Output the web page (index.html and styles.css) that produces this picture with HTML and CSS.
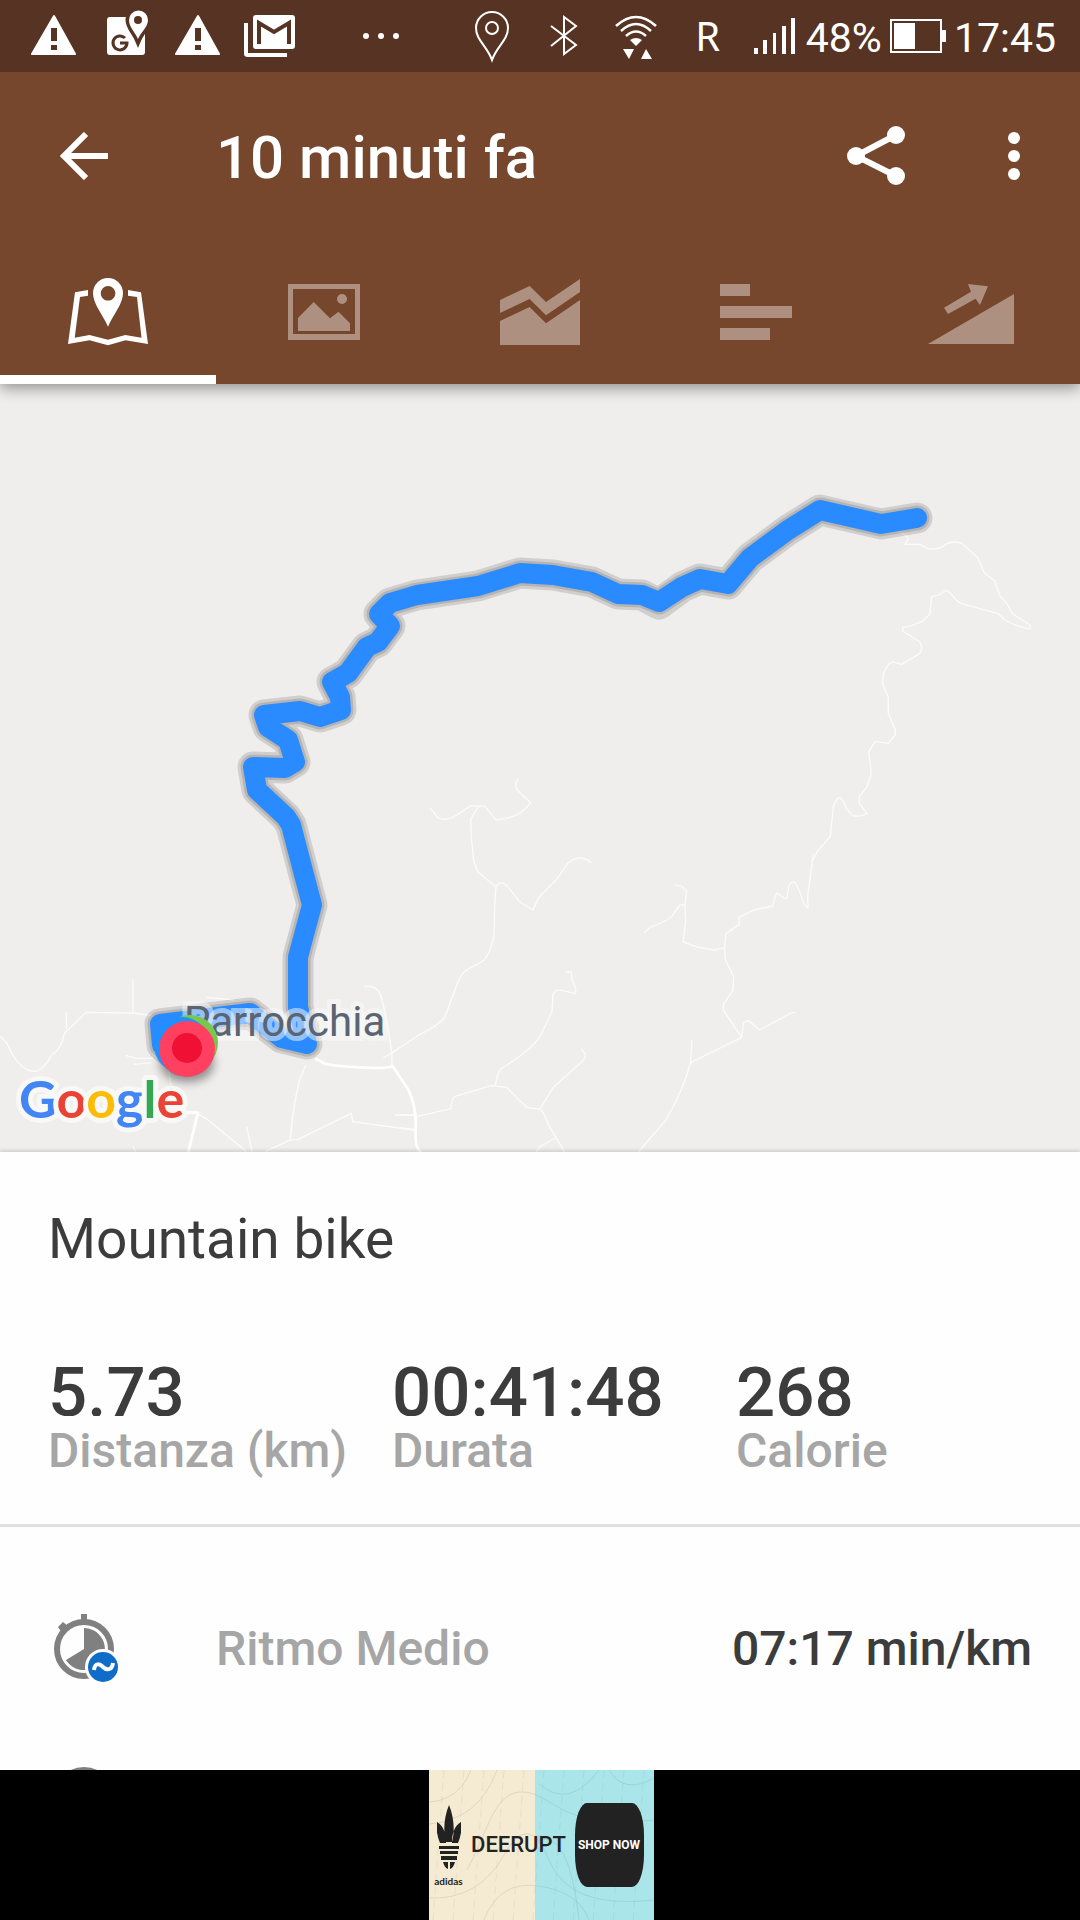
FILE: index.html
```html
<!DOCTYPE html>
<html lang="it">
<head>
<meta charset="utf-8">
<meta name="viewport" content="width=device-width, initial-scale=1">
<title>10 minuti fa</title>
<link rel="stylesheet" href="styles.css">
</head>
<body>
<div class="status">
  <div class="status-group">
    <svg class="status-icon" viewBox="0 0 72 72" aria-hidden="true"><path fill="#fff" stroke="#fff" stroke-width="2" stroke-linejoin="round" d="M36 16 57 54H14Z"/><path fill="#573323" d="M33 28h6v13h-6zM33 45h6v5h-6z"/></svg>
    <svg class="status-icon" viewBox="0 0 72 72" aria-hidden="true"><rect x="17" y="17" width="38" height="38" rx="3" fill="#fff"/><path fill="#fff" stroke="#573323" stroke-width="7" d="M48 39C45 32 39 27 39 20a9 9 0 0 1 18 0c0 7-6 12-9 19Z"/><path fill="#573323" d="M55 10h9v25h-9z"/><path fill="#fff" d="M48 39C45 32 39 27 39 20a9.500 9.500 0 0 1 19 0c0 7-7 12-10 19Z"/><circle cx="48" cy="20" r="4" fill="#573323"/><path fill="none" stroke="#573323" stroke-width="3" d="M35 38a7 7 0 1 0 2 5h-7"/></svg>
    <svg class="status-icon" viewBox="0 0 72 72" aria-hidden="true"><path fill="#fff" stroke="#fff" stroke-width="2" stroke-linejoin="round" d="M36 16 57 54H14Z"/><path fill="#573323" d="M33 28h6v13h-6zM33 45h6v5h-6z"/></svg>
    <svg class="status-icon" viewBox="0 0 72 72" aria-hidden="true"><rect x="37" y="15" width="42" height="34" rx="3" fill="#fff" transform="translate(-18 0)"/><path fill="none" stroke="#fff" stroke-width="4" d="M12 23v31q0 1 2 1h39"/><path fill="none" stroke="#573323" stroke-width="4" d="M25 44V23l15 9 15-9v21"/></svg>
  </div>
  <svg class="status-icon" viewBox="0 0 72 72" aria-hidden="true"><g fill="#fff"><circle cx="21" cy="36" r="3"/><circle cx="36" cy="36" r="3"/><circle cx="51" cy="36" r="3"/></g></svg>
  <div class="status-group">
    <svg class="status-icon" viewBox="0 0 72 72" aria-hidden="true"><g fill="none" stroke="#fff" stroke-width="2"><path d="M36 60C31 46 20 40 20 28a16 16 0 0 1 32 0c0 12-11 18-16 32Z"/><circle cx="36" cy="28" r="6"/></g></svg>
    <svg class="status-icon" viewBox="0 0 72 72" aria-hidden="true"><path fill="none" stroke="#fff" stroke-width="2" d="m23 26 25 19-12 9V17l12 9-25 20"/></svg>
    <svg class="status-icon" viewBox="0 0 72 72" aria-hidden="true"><g fill="none" stroke="#fff" stroke-width="2.500"><path d="M16 26q20-18 40 0M21 31q15-14 30 0M26 36q10-9 20 0"/></g><path fill="#fff" d="M30 40q6-4 12 0l-6 6zM23 49h11l-5 10zM41 59l5-10 6 10z"/></svg>
    <span class="roaming">R</span>
    <svg class="signal" viewBox="0 0 42 72" aria-hidden="true"><path fill="#fff" d="M0 48h4v6H0zM9 40h4v14H9zM19 33h3v21h-3zM28 26h4v28h-4zM37 18h4v36h-4z"/></svg>
    <span class="status-text">48%</span>
    <svg class="battery" viewBox="0 0 56 72" aria-hidden="true"><rect x="1" y="20" width="50" height="32" fill="none" stroke="#fff" stroke-width="2"/><path fill="#fff" d="M4 23h21v26H4zM52 30h4v12h-4z"/></svg>
    <span class="status-text">17:45</span>
  </div>
</div>

<header class="appbar">
  <div class="toolbar">
    <button class="icon-button back" type="button" aria-label="Indietro"><svg class="back-icon" viewBox="0 0 48 48"><path fill="none" stroke="#fff" stroke-width="6" d="M26 2 4 24l22 22M3 24h45"/></svg></button>
    <h1 class="title">10 minuti fa</h1>
    <button class="icon-button" type="button" aria-label="Condividi"><svg class="action-icon" viewBox="0 0 72 72"><path fill="none" stroke="#fff" stroke-width="6" d="M56 15 16 36l40 20"/><g fill="#fff"><circle cx="56" cy="15" r="9"/><circle cx="16" cy="36" r="9"/><circle cx="56" cy="56" r="9"/></g></svg></button>
    <button class="icon-button" type="button" aria-label="Altro"><svg class="action-icon" viewBox="0 0 72 72"><g fill="#fff"><circle cx="36" cy="18" r="6"/><circle cx="36" cy="36" r="6"/><circle cx="36" cy="54" r="6"/></g></svg></button>
  </div>
  <nav class="tabs">
    <button class="tab tab-active" type="button" aria-label="Mappa"><svg class="tab-icon" viewBox="0 0 96 96"><path d="M28 26 15 28.300 8 80 29.500 76.300 48 81.300 65.500 76.300 88 80 81 28.300 68 26V31.700L77 33 81.500 73.700 65.300 71 48 75.700 29.500 71 14.700 73.700 20 33 28 31.700Z"/><path fill-rule="evenodd" d="M48 62.700C43 51 33 40 33 29a15 15 0 0 1 30 0c0 11-10 22-15 33.700ZM48 22a7.300 7.300 0 1 0 .1 0Z"/></svg></button>
    <button class="tab" type="button" aria-label="Foto"><svg class="tab-icon" viewBox="0 0 96 96"><path fill-rule="evenodd" d="M12 20H84V76H12ZM17 25V70H79V25Z"/><path d="M22 54 37.700 38 54 54.300 62.500 47.700 74 59.300V67H22Z"/><circle cx="66" cy="35" r="5"/></svg></button>
    <button class="tab" type="button" aria-label="Grafico"><svg class="tab-icon" viewBox="0 0 96 96"><path d="M8 36 37.600 22 54 38 88 15V28L54 51.300 37.600 35 8 49ZM8 57 37.600 43 54 59.300 88 36V81H8Z"/></svg></button>
    <button class="tab" type="button" aria-label="Parziali"><svg class="tab-icon" viewBox="0 0 96 96"><path d="M12 20H42V32H12ZM12 42H84V54H12ZM12 64H62V76H12Z"/></svg></button>
    <button class="tab" type="button" aria-label="Dislivello"><svg class="tab-icon" viewBox="0 0 96 96"><path d="M4 80 90 30V80ZM20 43.700 47 27.700 44 20 64 22.300 56 41 51.600 34.700 24 50Z"/></svg></button>
  </nav>
</header>

<main class="content">
  <svg class="map" viewBox="0 384 1080 768" role="img" aria-label="Mappa del percorso">
    <g fill="none" stroke="#fbfbfa" stroke-linejoin="round">
      <!-- eastern mountain road -->
      <g transform="translate(600 460) scale(.3333)" stroke-width="4">
        <path d="M885 205 922 230 924 240 914 253H960L985 267Q1015 270 1035 255T1085 250L1132 292 1153 338 1184 362 1200 408 1222 432 1236 460 1290 495V507Q1250 500 1215 480L1195 461 1085 431Q1070 425 1060 410T1038 391L1020 403 995 410 990 462 968 484 935 497 908 502V513L960 546Q970 565 960 580L905 613 880 606 866 612 850 640 848 672 865 712V760L886 810V825L865 850 826 844 806 875 814 942 800 982 778 1010V1030L801 1060Q785 1072 758 1067L738 1044Q725 1005 712 1017T698 1060L691 1130 652 1174 640 1200"/>
      </g>
      <!-- central valleys -->
      <g transform="translate(400 740) scale(.3333)" stroke-width="4">
        <path d="M90 204 115 234Q140 245 170 225T215 197L255 199 288 240Q360 235 392 188L352 150Q340 132 355 117M238 197 212 237Q213 300 221 360L232 394 288 441 284 500 282 590 269 633 253 660 198 691Q180 705 168 741T132 836L100 862 65 880-50 955M288 441Q303 415 325 442L360 486 399 510 416 473 470 418 505 368Q540 340 574 368"/>
        <path d="M1240 340 1235 380 1223 470 1224 505 1212 492Q1200 455 1190 435T1167 435L1161 475H1153L1130 458 1118 498 1062 510 1017 532V554L978 581 974 625 976 658 1001 710 999 751 970 794V810L1025 892 1031 847 1045 842 1080 870 1175 818H1187M826 436Q850 435 860 455L855 495H840L815 530Q800 545 750 562L732 580M855 495 857 545 849 605Q890 625 945 630L974 623M1025 892 872 968 876 900M872 968Q850 1050 798 1140L715 1236"/>
        <path d="M495 696H514L516 720 527 745V761L485 751H468L459 763 456 815 421 888Q395 930 302 987 290 1005 286 1038M544 926 557 945 551 960 460 1042 420 1107 382 1103Q350 1075 320 1042L274 1037 165 1069Q155 1075 152 1106L50 1130M420 1107 430 1118 448 1160 494 1236M466 1194 423 1218 408 1236"/>
        <path d="M0 1125H48M0 1163 45 1168"/>
      </g>
      <!-- village streets -->
      <g transform="translate(0 820) scale(.3444 .3333)" stroke-width="4">
        <path d="M0 648 20 670Q50 740 85 752T148 708Q180 685 187 640L250 577 385 579 440 587M193 577V628M386 478V579M600 532 680 540M365 706 395 715H445M388 733 440 728M490 750 498 810M888 735 870 780Q850 860 843 960L770 995M843 960 865 958 1020 880 1024 905 1202 930M1147 885H1210M578 884 600 897 716 995M716 920 732 995M386 978 394 995M1057 500Q1090 495 1103 520 1118 560 1138 700V740M1138 700 1160 685"/>
        <path stroke="#fff" stroke-width="8" d="M915 715 945 732Q1000 743 1115 744L1140 739 1185 808Q1210 860 1207 925T1223 995M540 878H575L547 995"/>
      </g>
    </g>
    <!-- recorded track with its dark casing -->
    <g fill="none" stroke-linejoin="round" stroke-linecap="round">
      <path id="track-outer" stroke="#000" stroke-opacity=".13" stroke-width="31" d="M917 518 881 524 820 510 788 530 750 558 728 584 700 579 682 587 659 604 642 595 618 594 592 582 553 575 520 573 478 586 417 595 390 603 379 614 390 626 378 642 367 647 348 673 332 682 340 697 341 710 320 717 300 711 264 715 268 727 288 740 295 762 285 768 253 767 257 790 286 817 291 825 312 905 298 957 298 1007 307 1044 282 1038 250 1013 160 1024 162 1045 180 1060"/>
      <path stroke="#000" stroke-opacity=".13" stroke-width="25" d="M917 518 881 524 820 510 788 530 750 558 728 584 700 579 682 587 659 602 642 595 618 594 592 582 553 575 520 573 478 586 417 595 390 603 379 614 390 626 378 642 367 647 348 673 332 682 340 697 341 710 320 717 300 711 264 715 268 727 288 740 295 762 285 768 253 767 257 790 286 817 291 825 312 905 298 957 298 1007 307 1044 282 1038 250 1013 160 1024 162 1045 180 1060"/>
      <path stroke="#2a8aff" stroke-width="20" d="M917 518 881 524 820 510 788 530 750 558 728 584 700 579 682 587 659 602 642 595 618 594 592 582 553 575 520 573 478 586 417 595 390 603 379 614 390 626 378 642 367 647 348 673 332 682 340 697 341 710 320 717 300 711 264 715 268 727 288 740 295 762 285 768 253 767 257 790 286 817 291 825 312 905 298 957 298 1007 307 1044 282 1038 250 1013 160 1024 162 1045 180 1060"/>
    </g>
    <text class="place" x="184" y="1036">Parrocchia</text>
    <rect class="marker-shadow" x="160" y="1044" width="54" height="38" rx="24"/>
    <circle cx="190" cy="1043" r="28" fill="#7ac74f"/>
    <circle cx="182" cy="1045" r="28" fill="#1e90ff"/>
    <circle cx="187" cy="1049" r="28" fill="#ff4060"/>
    <circle cx="187" cy="1048" r="15" fill="#f01033"/>
    <text class="google" x="19" y="1118"><tspan fill="#4285f4">G</tspan><tspan fill="#ea4335">o</tspan><tspan fill="#fbbc05">o</tspan><tspan fill="#4285f4">g</tspan><tspan fill="#34a853">l</tspan><tspan fill="#ea4335">e</tspan></text>
  </svg>

  <section class="summary">
    <h2 class="activity">Mountain bike</h2>
    <dl class="stats">
      <div class="stat"><dd class="stat-value">5.73</dd><dt class="stat-label">Distanza (km)</dt></div>
      <div class="stat"><dd class="stat-value">00:41:48</dd><dt class="stat-label">Durata</dt></div>
      <div class="stat"><dd class="stat-value">268</dd><dt class="stat-label">Calorie</dt></div>
    </dl>
  </section>

  <ul class="details">
    <li class="detail">
      <svg class="detail-icon" viewBox="0 0 72 72" aria-hidden="true"><circle cx="36" cy="36" r="27" fill="none" stroke="#808080" stroke-width="6"/><path fill="#808080" d="M33 1h6v8h-6zM10 14l5-5 6 5-7 6zM36 36V15A21 21 0 1 1 18 47Z"/><circle cx="55" cy="54" r="18" fill="#fff"/><circle cx="55" cy="54" r="15" fill="#0f6cc8"/><path fill="none" stroke="#fff" stroke-width="4" d="M46 57c1-8 6-6 9-3s9 4 10-4"/></svg>
      <span class="detail-label">Ritmo Medio</span>
      <span class="detail-value">07:17 min/km</span>
    </li>
    <li class="detail">
      <svg class="detail-icon" viewBox="0 0 72 72" aria-hidden="true"><circle cx="36" cy="36" r="27" fill="none" stroke="#808080" stroke-width="6"/></svg>
    </li>
  </ul>
</main>

<aside class="ad">
  <div class="banner">
    <svg class="contours" viewBox="0 0 225 150" aria-hidden="true"><g fill="none" stroke="#6b8a80" stroke-opacity=".18"><path d="M0 32Q30 30 42 0M0 54Q50 50 68 0M38 100C60 60 65 20 95 22S130 60 225 50M0 128Q50 130 75 85T120 90 225 130M55 150Q70 110 110 116T160 150M110 14Q140 40 170 0M180 0Q195 25 225 8M110 70Q140 60 150 150"/></g><path fill="none" stroke="#6b8a80" stroke-opacity=".1" stroke-dasharray="8 5" d="M15 0 4 150M35 0 24 150M55 0 44 150M75 0 64 150M95 0 84 150M115 0 104 150M135 0 124 150M155 0 144 150M175 0 164 150M195 0 184 150M215 0 204 150"/></svg>
    <div class="brand">
      <svg class="trefoil" viewBox="0 0 24 64" aria-hidden="true"><path fill="#222" d="M12 0C17 12 18 26 15 37H9C6 26 7 12 12 0ZM0 17C7 21 9 29 9 38H3C0 31-1 24 0 17ZM24 17C17 21 15 29 15 38h6c3-7 4-14 3-21ZM2 41h20v3H2zM3 46h18v3H3zM4 51h16v4H4zM6 57h5v7C8 63 7 60 6 57zM18 57h-5v7c3-1 4-4 5-7z"/></svg>
      <span class="brand-name">adidas</span>
    </div>
    <span class="product">DEERUPT</span>
    <button class="shop" type="button">SHOP NOW</button>
  </div>
</aside>
</body>
</html>
```
FILE: styles.css
```css
* { box-sizing: border-box; }

body {
  margin: 0;
  height: 100vh;
  display: flex;
  flex-direction: column;
  overflow: hidden;
  background: #fefefe;
  color: #3c3c3c;
  font-family: Roboto, "Noto Sans", sans-serif;
}

svg { display: block; flex: none; }

button {
  margin: 0;
  padding: 0;
  border: 0;
  background: none;
  font: inherit;
}

/* Status bar */
.status {
  flex: none;
  position: relative;
  z-index: 1;
  display: flex;
  justify-content: space-between;
  align-items: center;
  padding: 0 24px 0 18px;
  background: #573323;
  color: #fff;
}
.status-group { display: flex; align-items: center; }
.status-icon { width: 72px; height: 72px; }
.roaming {
  width: 72px;
  text-align: center;
  font: 40px/72px "Noto Sans", sans-serif;
}
.signal { width: 42px; height: 72px; margin: 0 10px; }
.battery { width: 56px; height: 72px; margin: 0 8px; }
.status-text { padding-top: 4px; font-size: 41px; line-height: 68px; }

/* App bar */
.appbar {
  flex: none;
  position: relative;
  background: #76472d;
  color: #fff;
  box-shadow: 0 4px 14px rgba(0, 0, 0, .4);
}
.toolbar {
  display: flex;
  align-items: center;
  padding: 48px 30px 48px 60px;
  gap: 66px;
}
.back { width: 90px; }
.back-icon { width: 48px; height: 48px; }
.action-icon { width: 72px; height: 72px; }
.title {
  flex: 1;
  margin: 0;
  padding-top: 4px;
  font-size: 60px;
  line-height: 68px;
  font-weight: 500;
}
.tabs { display: grid; grid-template-columns: repeat(5, 1fr); }
.tab {
  display: flex;
  justify-content: center;
  padding: 24px 0 15px;
  border-bottom: 9px solid transparent;
}
.tab-active { border-color: #fff; }
.tab-icon { width: 96px; height: 96px; fill: #ae9080; }
.tab-active .tab-icon { fill: #fff; }

/* Map */
.content { flex: 1; min-height: 0; overflow: hidden; }
.map { width: 100%; height: auto; background: #efeeec; }
.place {
  font-size: 42px;
  fill: #5a6472;
  stroke: rgba(250, 250, 249, .5);
  stroke-width: 10px;
  paint-order: stroke;
}
.marker-shadow { fill: rgba(0, 0, 0, .4); filter: blur(5px); }
.google {
  font-family: Lato, sans-serif;
  font-size: 52px;
  font-weight: 700;
  stroke: #f8f8f7;
  stroke-width: 10px;
  stroke-linejoin: round;
  paint-order: stroke;
}

/* Activity summary */
.summary {
  position: relative;
  padding: 55px 0 45px 48px;
  border-bottom: 3px solid #e0e0e0;
  box-shadow: 0 -2px 3px rgba(0, 0, 0, .12);
  background: #fefefe;
}
.activity {
  margin: 0 0 87px;
  font-size: 55px;
  line-height: 64px;
  font-weight: 400;
}
.stats { display: grid; grid-template-columns: repeat(3, 1fr); margin: 0; }
.stat { display: flex; flex-direction: column; gap: 7px; }
.stat-value {
  margin: 0;
  height: 58px;
  overflow: hidden;
  font-size: 69px;
  line-height: 70px;
  font-weight: 500;
}
.stat-label {
  color: #a6a6a6;
  font-size: 48px;
  line-height: 56px;
  font-weight: 500;
}

/* Detail rows */
.details { margin: 0; padding: 48px; list-style: none; }
.detail {
  display: flex;
  align-items: center;
  padding: 38px 0;
  font-size: 48px;
  line-height: 56px;
  font-weight: 500;
}
.detail-icon { width: 72px; height: 72px; }
.detail-label { flex: 1; margin-left: 96px; color: #a6a6a6; }

/* Advertisement */
.ad {
  flex: none;
  display: flex;
  justify-content: center;
  padding-left: 2px;
  background: #000;
}
.banner {
  position: relative;
  display: flex;
  align-items: center;
  width: 225px;
  height: 150px;
  padding: 0 10px 0 6px;
  background: linear-gradient(90deg, #f5ead2 106px, #a9e5e9 106px);
  color: #222;
}
.contours { position: absolute; inset: 0; width: 100%; height: 100%; }
.brand {
  position: relative;
  display: flex;
  flex-direction: column;
  align-items: center;
  width: 28px;
  padding-top: 8px;
}
.trefoil { width: 24px; height: 64px; }
.brand-name { font: 700 10px/24px Lato, sans-serif; }
.product {
  position: relative;
  flex: 1;
  text-align: center;
  font: 500 22px/36px Roboto, sans-serif;
}
.shop {
  position: relative;
  width: 69px;
  height: 84px;
  border-radius: 12px / 32px;
  background: #222;
  color: #fff;
  font: 700 12px/28px Roboto, sans-serif;
  white-space: nowrap;
}
```
